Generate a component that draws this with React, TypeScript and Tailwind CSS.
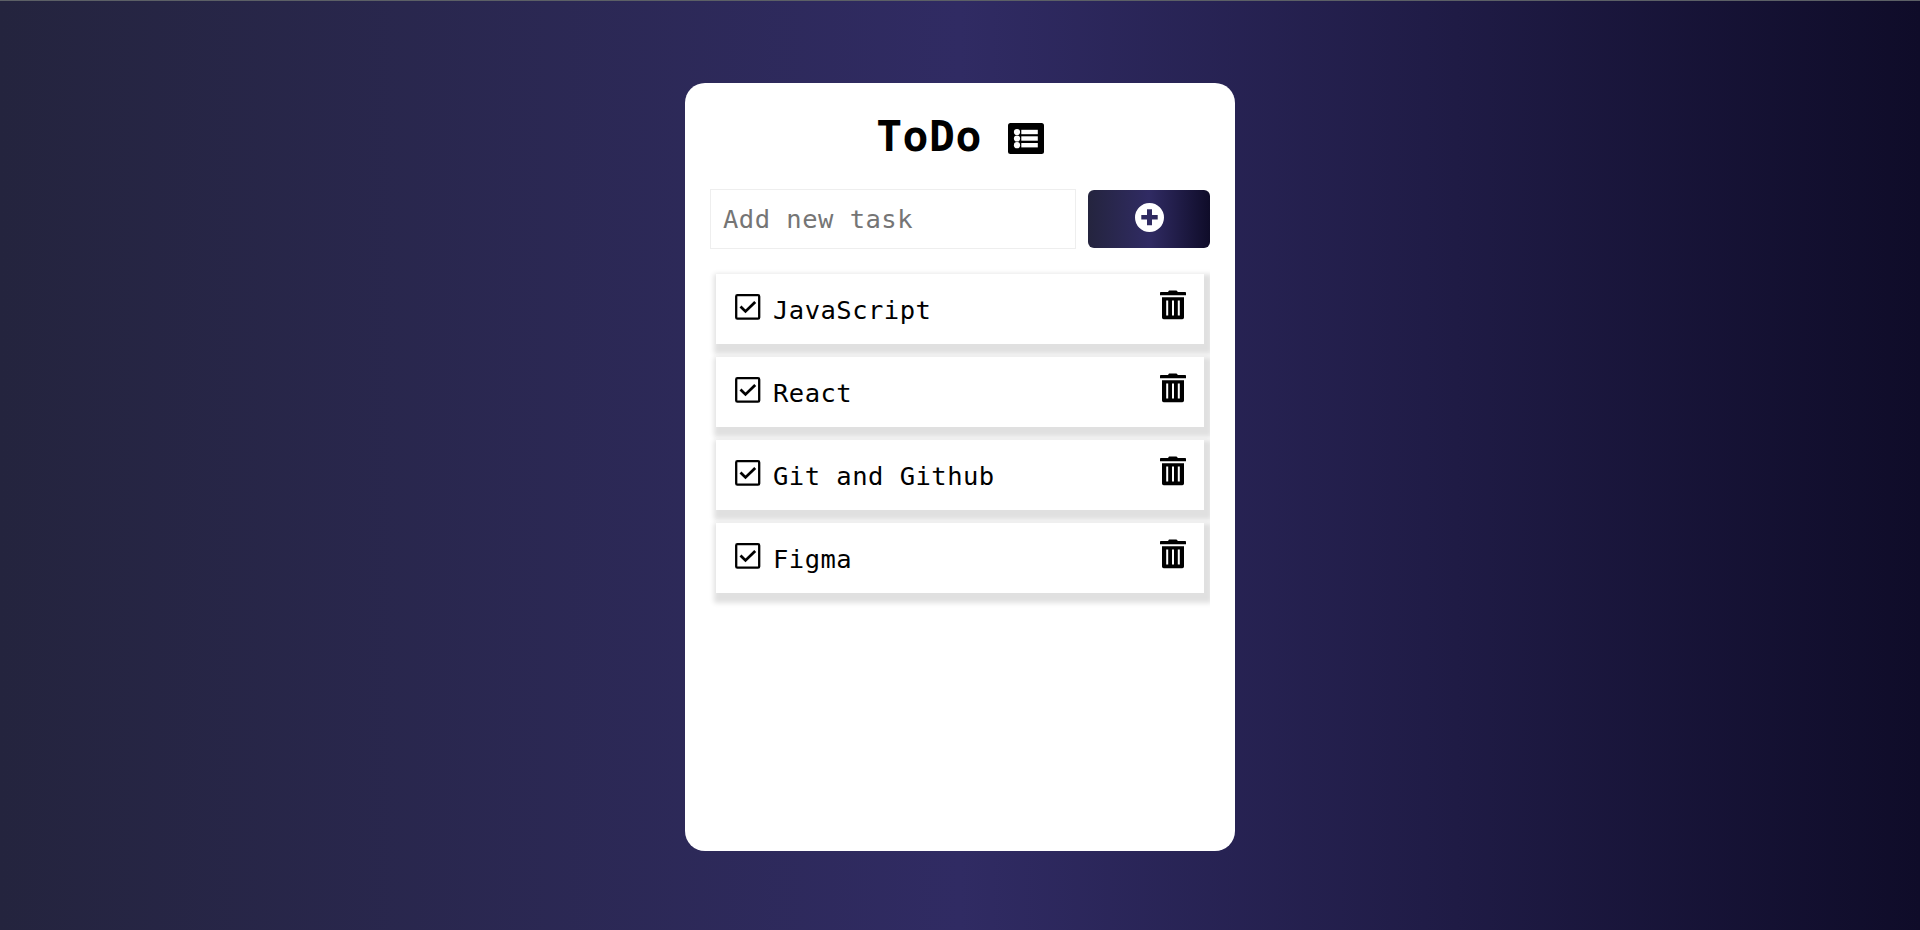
const TASKS = ["JavaScript", "React", "Git and Github", "Figma"];

const ListIcon = () => (
  <svg width="36" height="31" viewBox="0 0 36 31" className="mt-px ml-[26px]">
    <rect width="36" height="31" rx="2.5" fill="#000" />
    {[9, 15.5, 22.2].map((y) => (
      <g key={y} fill="#fff">
        <circle cx="9" cy={y} r="3.1" />
        <rect x="13.3" y={y - 2.2} width="16.5" height="4.4" />
      </g>
    ))}
  </svg>
);

const PlusIcon = () => (
  <svg width="29" height="29" viewBox="0 0 29 29" className="-mt-[3px]">
    <path fill="#fff" fillRule="evenodd" d="M14.5 0a14.5 14.5 0 1 1 0 29a14.5 14.5 0 0 1 0-29ZM12 6.3V12H6.3v4.5H12v5.7h5v-5.7h5.7V12H17V6.3Z" />
  </svg>
);

const CheckIcon = () => (
  <svg width="26" height="26" viewBox="0 0 26 26" fill="none" stroke="#000">
    <rect x="1.2" y="1.2" width="23" height="23.4" rx="1.2" strokeWidth="2.3" />
    <path d="M5.5 12.4l5 5L20.2 8" strokeWidth="2.8" />
  </svg>
);

const TrashIcon = () => (
  <svg width="26" height="30" viewBox="0 0 26 30">
    <path d="M0 2.5Q0 2 1 2H8L9 .5H16.5L18 2H25Q26 2 26 2.5V5.2H0Z" />
    <path fillRule="evenodd" d="M2 7.2H24V27.5Q24 29.2 22.3 29.2H3.7Q2 29.2 2 27.5ZM6.2 10.5V25.5H8.2V10.5ZM12 10.5V25.5H14V10.5ZM17.8 10.5V25.5H19.8V10.5Z" />
  </svg>
);

export default function App() {
  return (
    <div className="h-[930px] border-t border-[#5c6066] bg-[linear-gradient(to_right,#24243e,#302b63,#0f0c29)] pt-[82px] font-['DejaVu_Sans_Mono',monospace]">
      <main className="mx-auto flex h-[768px] w-[550px] flex-col rounded-[20px] bg-white px-[25px] pt-[25px]">
        <h1 className="flex h-[60px] items-center justify-center text-[43px] font-bold tracking-[0.5px] text-black">
          <span className="-mt-[3px]">ToDo</span>
          <ListIcon />
        </h1>
        <div className="mt-[21px] flex h-[60px] items-center gap-3">
          <input
            placeholder="Add new task"
            className="h-[60px] w-[366px] border border-[#eee] px-3 text-[25.5px] tracking-[0.48px] text-black outline-none placeholder:text-[#757575]"
          />
          <button className="flex h-[58px] w-[122px] items-center justify-center rounded-md bg-[linear-gradient(to_right,#24243e,#302b63,#0f0c29)]">
            <PlusIcon />
          </button>
        </div>
        <ul className="-ml-[10px] flex flex-col gap-[13px] overflow-hidden pt-[25px] pb-5 pl-[16px]">
          {TASKS.map((task) => (
            <li key={task} className="flex h-[70px] w-[488px] items-start bg-white pt-5 pr-[18px] pl-[19px] shadow-[3px_5px_5px_5px_#e0e0e0]">
              <CheckIcon />
              <span className="ml-3 flex-1 text-[25.5px] leading-8 tracking-[0.48px] text-black">{task}</span>
              <span className="-mt-1">
                <TrashIcon />
              </span>
            </li>
          ))}
        </ul>
      </main>
    </div>
  );
}
